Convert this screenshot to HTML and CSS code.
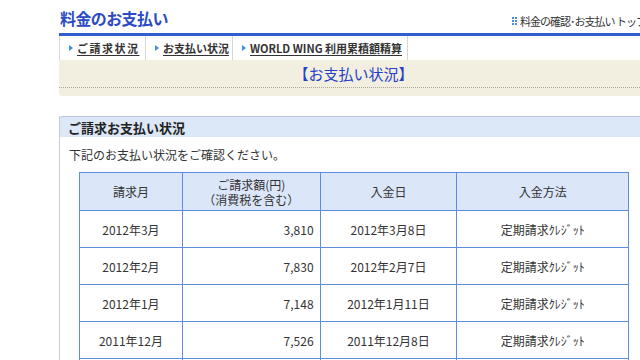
FILE: index.html
```html
<!DOCTYPE html>
<html lang="ja">
<head>
  <meta charset="UTF-8">
  <title>料金のお支払い</title>
  <link rel="stylesheet" href="styles.css">
</head>
<body>
  <div class="page">
    <div class="header">
      <h1 class="title">料金のお支払い</h1>
      <a class="top-link" href="#">
        <svg class="dots" width="5" height="9" viewBox="0 0 5 9">
          <rect x="0" y="0" width="2" height="2" fill="#4a8ce0"/>
          <rect x="3" y="0" width="2" height="2" fill="#4a8ce0"/>
          <rect x="0" y="3" width="2" height="2" fill="#4a8ce0"/>
          <rect x="3" y="3" width="2" height="2" fill="#4a8ce0"/>
          <rect x="0" y="6" width="2" height="2" fill="#4a8ce0"/>
          <rect x="3" y="6" width="2" height="2" fill="#4a8ce0"/>
        </svg>料金の確認･お支払い トップへ
      </a>
    </div>

    <ul class="tabs">
      <li class="tab tab-1"><a href="#"><span class="arrow"></span><span class="spaced">ご請求状況</span></a></li>
      <li class="tab tab-2"><a href="#"><span class="arrow"></span><span>お支払い状況</span></a></li>
      <li class="tab tab-3"><a href="#"><span class="arrow"></span><span>WORLD WING 利用累積額精算</span></a></li>
    </ul>

    <div class="banner">
      <h2>【お支払い状況】</h2>
    </div>

    <div class="section">
      <h3 class="section-head">ご請求お支払い状況</h3>
      <p class="lead">下記のお支払い状況をご確認ください。</p>

      <table class="pay-table">
        <thead>
          <tr>
            <th class="c-month">請求月</th>
            <th class="c-amount">ご請求額(円)<br>（消費税を含む）</th>
            <th class="c-date">入金日</th>
            <th class="c-method">入金方法</th>
          </tr>
        </thead>
        <tbody>
          <tr>
            <td>2012年3月</td>
            <td class="num">3,810</td>
            <td>2012年3月8日</td>
            <td>定期請求ｸﾚｼﾞｯﾄ</td>
          </tr>
          <tr>
            <td>2012年2月</td>
            <td class="num">7,830</td>
            <td>2012年2月7日</td>
            <td>定期請求ｸﾚｼﾞｯﾄ</td>
          </tr>
          <tr>
            <td>2012年1月</td>
            <td class="num">7,148</td>
            <td>2012年1月11日</td>
            <td>定期請求ｸﾚｼﾞｯﾄ</td>
          </tr>
          <tr>
            <td>2011年12月</td>
            <td class="num">7,526</td>
            <td>2011年12月8日</td>
            <td>定期請求ｸﾚｼﾞｯﾄ</td>
          </tr>
          <tr>
            <td>2011年11月</td>
            <td class="num">7,412</td>
            <td>2011年11月8日</td>
            <td>定期請求ｸﾚｼﾞｯﾄ</td>
          </tr>
        </tbody>
      </table>
    </div>
  </div>
</body>
</html>
```

FILE: styles.css
```css
* {
  box-sizing: border-box;
}

body {
  margin: 0;
  background: #fff;
  color: #333;
  font-family: "Noto Sans CJK JP", "Liberation Sans", sans-serif;
  font-size: 12px;
  overflow: hidden;
}

.page {
  width: 589px;
  margin-left: 59px;
}

.header {
  display: flex;
  justify-content: space-between;
  align-items: flex-end;
  height: 36px;
  padding-bottom: 5px;
  border-bottom: 3px solid #2f5fcf;
}

.title {
  margin: 0 0 0 1px;
  font-size: 16px;
  line-height: 19px;
  font-weight: bold;
  color: #2b4ac4;
  letter-spacing: -0.6px;
}

.top-link {
  display: flex;
  align-items: center;
  gap: 2px;
  margin-right: -8px;
  font-size: 11px;
  line-height: 14px;
  letter-spacing: -1px;
  color: #333;
  text-decoration: none;
  white-space: nowrap;
}

.dots {
  margin-right: 1px;
}

.tabs {
  display: flex;
  margin: 0;
  padding: 0;
  list-style: none;
  height: 24px;
}

.tab {
  display: flex;
  align-items: center;
  border-left: 1px solid #d6d6d6;
  padding-left: 9px;
}

.tab-1 { width: 86px; }
.tab-2 { width: 87px; }
.tab-3 {
  width: 176px;
  border-right: 1px solid #d6d6d6;
}

.tab a {
  display: flex;
  align-items: center;
  color: #333;
  font-size: 11px;
  font-weight: bold;
  text-decoration: underline;
  text-underline-offset: 2px;
  white-space: nowrap;
}

.tab .spaced {
  letter-spacing: 1.5px;
}

.arrow {
  width: 0;
  height: 0;
  margin-right: 4px;
  border-top: 3px solid transparent;
  border-bottom: 3px solid transparent;
  border-left: 4px solid #3b8fe8;
}

.banner {
  height: 36px;
  padding-bottom: 8px;
  background: #f3efe0;
  border-radius: 0 0 3px 3px;
}

.banner h2 {
  margin: 0;
  height: 28px;
  line-height: 27px;
  text-align: center;
  font-size: 15px;
  font-weight: normal;
  color: #2440c8;
  border-bottom: 1px dotted #aaa69a;
}

.section {
  margin-top: 20px;
  border-left: 1px solid #c3ccd8;
  padding-bottom: 20px;
}

.section-head {
  margin: 0;
  height: 21px;
  line-height: 21px;
  padding-left: 8px;
  font-size: 13px;
  font-weight: bold;
  color: #222;
  background: #dce7f8;
  border-top: 1px solid #b7c6dc;
  border-radius: 3px 0 0 0;
}

.lead {
  margin: 10px 0 9px 9px;
  font-size: 12px;
  line-height: 16px;
  color: #333;
}

.pay-table {
  margin-left: 19px;
  width: 550px;
  border-collapse: collapse;
  font-size: 12px;
  color: #333;
}

.pay-table th,
.pay-table td {
  border: 1px solid #5d8ede;
  text-align: center;
  font-weight: normal;
}

.pay-table th {
  height: 38px;
  line-height: 15px;
  background: #dbe6f8;
}

.pay-table td {
  height: 37px;
}

.pay-table td.num {
  text-align: right;
  padding-right: 6px;
}

.c-month { width: 103px; }
.c-amount { width: 138px; }
.c-date { width: 137px; }
.c-method { width: 172px; }
```
